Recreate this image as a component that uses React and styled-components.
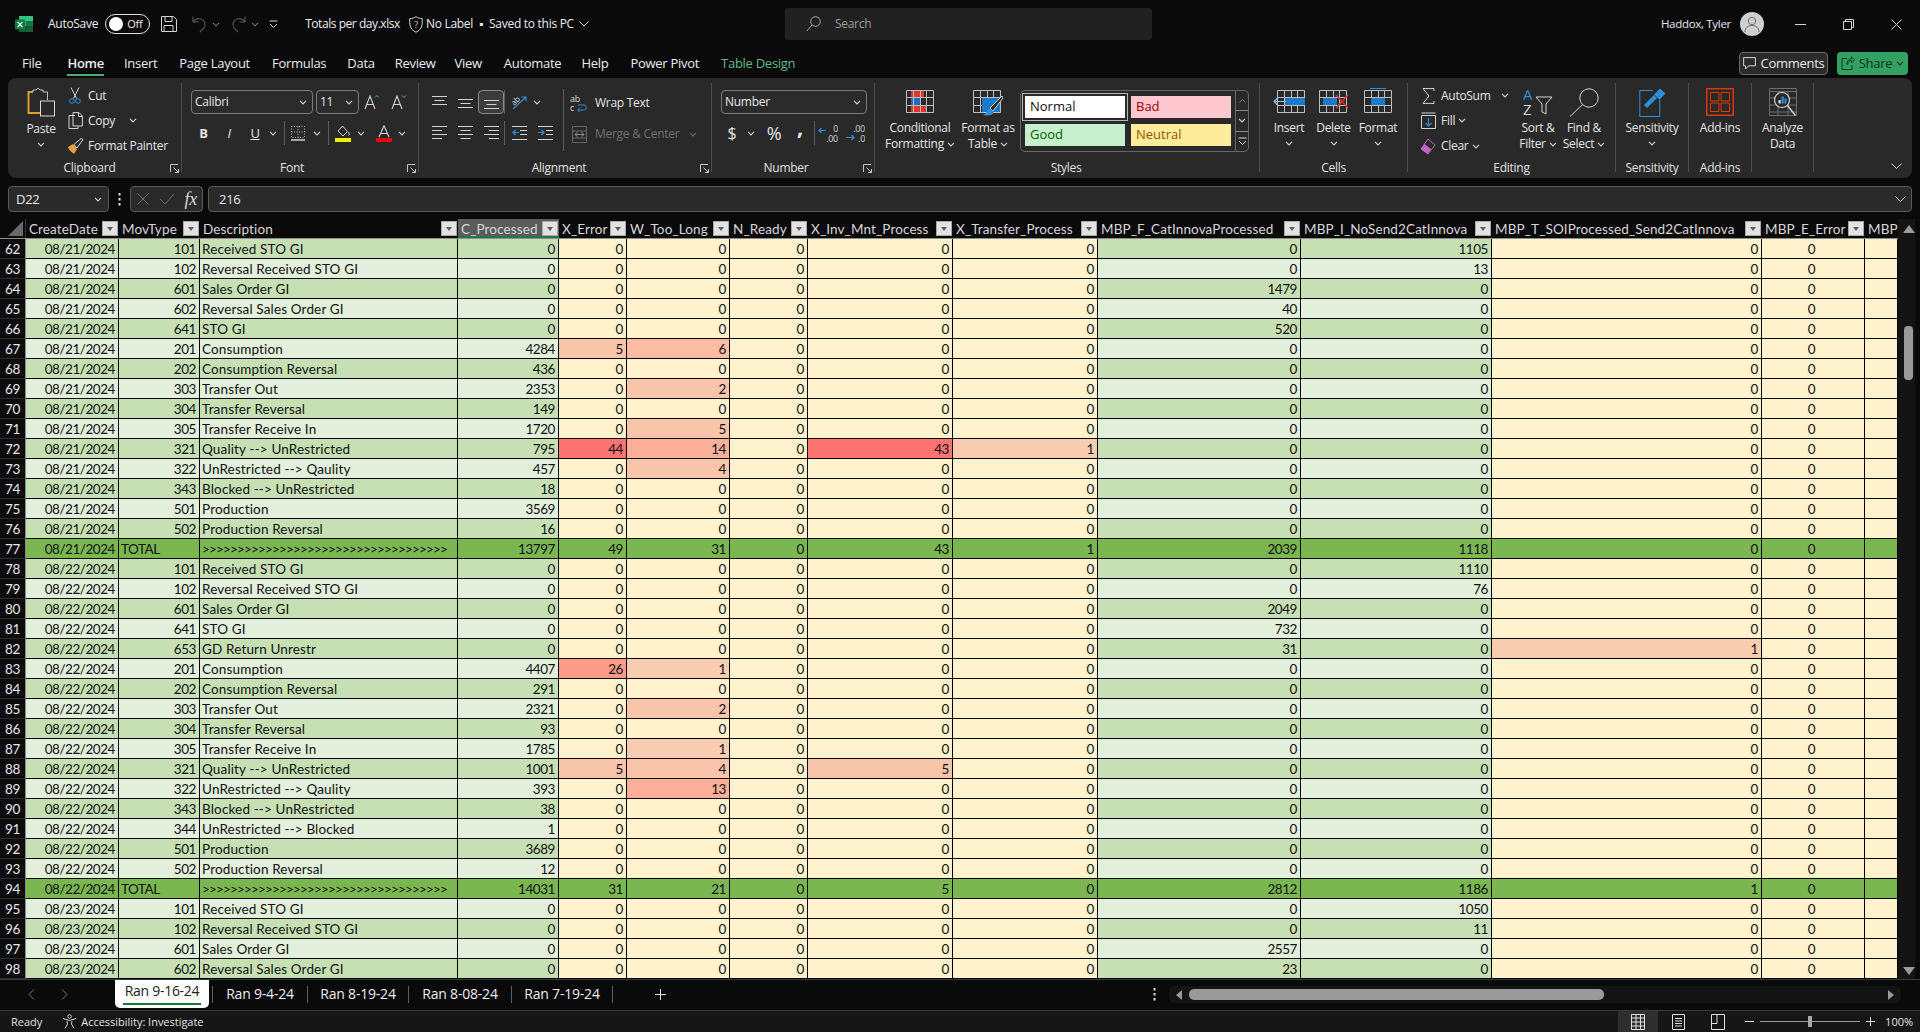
import React from 'react';
import styled, { createGlobalStyle } from 'styled-components';

const Global = createGlobalStyle`
  html, body { margin: 0; padding: 0; background: #0a0a0a; }
  #root { width: 1920px; height: 1032px; overflow: hidden; }
`;

const UI = `"Open Sans", "Noto Sans", sans-serif`;
const SHEET = `Lato, "Open Sans", sans-serif`;
const COLS = '26px 93px 81px 258px 101px 68px 103px 78px 145px 145px 203px 191px 270px 103px 33px';

const Page = styled.div`
  width: 1920px; height: 1032px; background: #0a0a0a; color: #e8e8e8;
  display: flex; flex-direction: column;
  font: 12px/16px ${UI}; letter-spacing: -0.28px; overflow: hidden;
`;

/* ---------- title bar ---------- */
const TitleBar = styled.div`height: 48px; display: flex; align-items: center; padding-left: 14px; flex: none;`;
const TitleText = styled.span`margin-left: ${p => p.$ml || 0}px; color: ${p => p.$c || '#ececec'}; white-space: nowrap; letter-spacing: ${p => p.$ls ?? -0.28}px;`;
const TitleIcon = styled.span`margin-left: ${p => p.$ml || 0}px; display: flex;`;
const Toggle = styled.div`
  margin-left: 7px; width: 45px; height: 20px; box-sizing: border-box; border: 1px solid #e0e0e0; border-radius: 10px;
  display: flex; align-items: center; padding: 0 3px; gap: 4px; font-size: 11px;
`;
const Knob = styled.span`width: 14px; height: 14px; border-radius: 50%; background: #fff;`;
const SearchBox = styled.div`
  margin-left: ${p => p.$ml}px; width: 367px; height: 32px; background: #212121; border-radius: 3px;
  display: flex; align-items: center; padding-left: 21px; gap: 14px; color: #9c9c9c; box-sizing: border-box;
`;
const TitleRight = styled.div`margin-left: auto; display: flex; align-items: center;`;
const UserName = styled.span`font-size: 11.5px; letter-spacing: -0.3px;`;
const Avatar = styled.span`
  margin: 0 12px 0 9px; width: 24px; height: 24px; border-radius: 50%; background: #cfcfcf; display: flex; align-items: center; justify-content: center;
`;
const WinBtn = styled.span`width: 48px; display: flex; justify-content: center;`;

/* ---------- tabs ---------- */
const TabRow = styled.div`height: 30px; display: flex; align-items: center; flex: none; padding-left: 22px; font-size: 13px;`;
const Tab = styled.span`
  margin-right: ${p => p.$mr}px; height: 24px; line-height: 26px; white-space: nowrap;
  color: ${p => p.$green ? '#5cbb80' : '#ececec'}; font-weight: ${p => p.$active ? 600 : 400};
  border-bottom: ${p => p.$active ? '2px solid #4aa870' : '2px solid transparent'};
`;
const TabTools = styled.div`margin-left: auto; display: flex; gap: 9px; padding-right: 12px;`;
const CommentBtn = styled.div`
  width: 89px; height: 23px; box-sizing: border-box; border: 1px solid #6a6a6a; border-radius: 4px; background: #2b2b2b;
  display: flex; align-items: center; justify-content: center; gap: 5px;
`;
const ShareBtn = styled.div`
  width: 71px; height: 23px; border-radius: 4px; background: #33a161; color: #10331f;
  display: flex; align-items: center; justify-content: center; gap: 4px;
`;

/* ---------- ribbon ---------- */
const Ribbon = styled.div`
  margin: 0 8px; height: 100px; flex: none; box-sizing: border-box; background: #292929; border-radius: 8px;
  display: flex; padding-top: 5px; color: #e6e6e6;
`;
const Group = styled.section`
  width: ${p => p.$w}px; height: 89px; flex: none; box-sizing: border-box; border-right: 1px solid #4c4c4c;
  display: flex; flex-direction: column;
`;
const Body = styled.div`
  height: 76px; flex: none; display: flex; padding-left: ${p => p.$pl || 0}px; box-sizing: border-box;
  justify-content: ${p => p.$center ? 'center' : 'flex-start'};
`;
const Foot = styled.div`
  height: 18px; flex: none; line-height: 18px; display: grid; grid-template-columns: 1fr auto 1fr; align-items: center; text-align: center;
  padding-right: ${p => p.$pr || 0}px; box-sizing: border-box; color: #e2e2e2;
`;
const Launcher = styled.span`grid-column: 3; justify-self: end; margin-right: ${p => p.$mr || 0}px; display: flex;`;
const FootLabel = styled.span`grid-column: 2;`;
const PasteCol = styled.div`width: 40px; display: flex; flex-direction: column; align-items: center; padding-top: 4px;`;
const PasteLabel = styled.span`margin-top: 4px; line-height: 16px;`;
const ChevRow = styled.span`display: flex; justify-content: center; height: 14px; align-items: center;`;
const Stack = styled.div`
  width: ${p => p.$w}px; margin-left: ${p => p.$ml || 0}px; display: flex; flex-direction: column; padding-top: ${p => p.$pt ?? 0}px;
`;
const StackRow = styled.div`
  height: 26px; display: flex; align-items: center; gap: ${p => p.$gap ?? 4}px; white-space: nowrap; color: ${p => p.$dim ? '#707070' : 'inherit'};
  margin-top: ${p => p.$mt || 0}px;
`;
const IconCell = styled.span`width: ${p => p.$w || 18}px; flex: none; display: flex; justify-content: center; align-items: center;`;
const Tools = styled.div`display: flex; flex-direction: column; gap: 7px; padding-top: 7px;`;
const ToolRow = styled.div`height: 24px; display: flex; align-items: center;`;
const Combo = styled.div`
  width: ${p => p.$w}px; height: 24px; box-sizing: border-box; border: 1px solid #7a7a7a; border-radius: 4px; background: #2b2b2b;
  margin-right: ${p => p.$mr || 0}px; padding: 0 5px 0 3px; display: flex; align-items: center; justify-content: space-between; flex: none;
`;
const Tool = styled.span`
  width: ${p => p.$w}px; height: 24px; flex: none; display: flex; align-items: center; justify-content: center; box-sizing: border-box;
  font-size: ${p => p.$fs || 12}px; padding-bottom: ${p => p.$pb || 0}px;
  ${p => p.$on ? 'border: 1px solid #8a8a8a; border-radius: 4px; background: #3c3c3c;' : ''}
`;
const Sep = styled.span`width: 1px; height: ${p => p.$h || 24}px; background: #5c5c5c; flex: none;`;
const TallSep = styled.span`width: 1px; height: 62px; margin-top: 6px; background: #5c5c5c; flex: none;`;
const Big = styled.div`
  width: ${p => p.$w ? p.$w + 'px' : 'auto'}; flex: none; display: flex; flex-direction: column; align-items: center; padding-top: 5px; text-align: center; white-space: nowrap;
`;
const BigIcon = styled.div`height: 28px; margin-bottom: 4px; display: flex; justify-content: center; align-items: flex-start;`;
const BigLine = styled.div`height: 16px; display: flex; align-items: center; justify-content: center; gap: 3px;`;
const Gallery = styled.div`
  width: 229px; height: 62px; margin: 7px 0 0 4px; box-sizing: border-box; border: 1px solid #666; border-radius: 5px; display: flex; flex: none;
`;
const GalleryGrid = styled.div`
  display: grid; grid-template-columns: 100px 100px; grid-auto-rows: 22px; gap: 6px; padding: 5px 0 0 4px; width: 215px; box-sizing: border-box;
`;
const Style = styled.div`
  background: ${p => p.$bg}; color: ${p => p.$c}; padding-left: 5px; font-size: 13px; line-height: 20px; letter-spacing: 0;
  ${p => p.$sel ? 'outline: 1px solid #b4b4b4; outline-offset: 2px;' : ''}
`;
const Scrollers = styled.div`width: 13px; margin-left: auto; display: flex; flex-direction: column;`;
const Scroller = styled.span`
  flex: 1; display: flex; align-items: center; justify-content: center; box-sizing: border-box; border-left: 1px solid #666;
  & + & { border-top: 1px solid #8a8a8a; }
`;
const Collapse = styled.div`flex: 1; display: flex; justify-content: flex-end; align-items: flex-end; padding: 0 10px 9px 0;`;

/* ---------- formula bar ---------- */
const FormulaBar = styled.div`margin: 8px 8px 0; height: 26px; display: flex; flex: none; align-items: stretch; font-size: 13px;`;
const NameBox = styled.div`
  width: 101px; box-sizing: border-box; border: 1px solid #5a5a5a; border-radius: 4px; background: #2a2a2a;
  display: flex; align-items: center; justify-content: space-between; padding: 0 6px 0 7px;
`;
const Dots = styled.span`width: 21px; display: flex; justify-content: center; align-items: center;`;
const FxBox = styled.div`
  width: 73px; box-sizing: border-box; border: 1px solid #5a5a5a; border-radius: 4px; background: #2a2a2a;
  display: flex; align-items: center; justify-content: space-between; padding: 0 5px 0 6px; margin-right: 5px;
`;
const FxLabel = styled.i`font: italic 18px "Liberation Serif", serif; color: #d8d8d8;`;
const FormulaInput = styled.div`
  flex: 1; box-sizing: border-box; border: 1px solid #5a5a5a; border-radius: 4px; background: #2a2a2a;
  display: flex; align-items: center; justify-content: space-between; padding: 0 5px 0 10px;
`;

/* ---------- sheet ---------- */
const SheetArea = styled.div`margin-top: 7px; display: flex; flex: none; height: 760px;`;
const Table = styled.div`width: 1898px; flex: none; overflow: hidden; font: 13.5px/21px ${SHEET}; letter-spacing: -0.45px;`;
const HeaderRow = styled.div`display: grid; grid-template-columns: ${COLS}; height: 20px; box-sizing: border-box; border-bottom: 1px solid #8f8f8f;`;
const Corner = styled.div`display: flex; align-items: flex-end; justify-content: flex-end; padding: 0 2px 2px 0; border-right: 1px solid #333;`;
const HeadCell = styled.div`
  display: flex; align-items: center; justify-content: space-between; padding: 0 1px 0 3px; overflow: hidden; white-space: nowrap; color: #d6d6d6;
  background: ${p => p.$sel ? '#5c5c5c' : '#0a0a0a'}; min-width: 0; box-sizing: border-box; letter-spacing: 0.12px;
  ${p => p.$sel ? 'box-shadow: inset 0 -2px 0 #1f7a4a;' : ''}
`;
const HeadText = styled.span`padding-top: 2px; line-height: 19px;`;
const Filter = styled.span`
  width: 16px; height: 15px; flex: none; background: #e2e2e2; border: 1px solid #a8a8a8; box-sizing: border-box;
  display: flex; align-items: center; justify-content: center;
  &::before { content: ''; border: 3.5px solid transparent; border-top: 4px solid #5e5e5e; border-bottom: 0; }
`;
const Row = styled.div`display: grid; grid-template-columns: ${COLS}; height: 20px;`;
const RowNum = styled.div`background: #0c0c0c; color: #e6e6e6; text-align: center; box-sizing: border-box; border-right: 1px solid #8f8f8f; border-bottom: 1px solid #2e2e2e; height: 20px; overflow: hidden;`;
const Cell = styled.div`
  background: ${p => p.$bg}; color: #111; box-sizing: border-box; border-right: 1px solid #000; border-bottom: 1px solid #000; height: 20px;
  text-align: ${p => p.$align || 'right'}; padding: 0 ${p => p.$align === 'left' ? 0 : 3}px 0 ${p => p.$align === 'left' ? 2 : 0}px;
  letter-spacing: ${p => p.$ls ?? -0.45}px;
  white-space: nowrap; overflow: hidden; min-width: 0;
`;
const VScroll = styled.div`
  width: 17px; flex: none; background: #141414; display: flex; flex-direction: column; align-items: flex-end;
  padding: 6px 0 4px; box-sizing: border-box;
`;
const VThumb = styled.div`width: 9px; height: 54px; margin: 93px 2px 0 0; border-radius: 4px; background: #9a9a9a;`;
const VEnd = styled.div`margin-top: auto;`;

/* ---------- sheet tabs ---------- */
const SheetBar = styled.div`height: 31px; flex: none; display: flex; align-items: flex-start; border-top: 1px solid #3a3a3a; box-sizing: border-box; font-size: 14px; letter-spacing: -0.2px;`;
const NavArrows = styled.div`width: 115px; height: 28px; display: flex; align-items: center; padding-left: 28px; gap: 26px; box-sizing: border-box;`;
const ActiveTab = styled.div`
  width: 94px; height: 28px; margin-right: 3px; background: #fff; color: #222; border-radius: 0 0 5px 5px; text-align: center; line-height: 22px; position: relative; box-sizing: border-box; font-weight: 500; letter-spacing: -0.28px;
  &::after { content: ''; position: absolute; left: 8px; right: 8px; bottom: 3px; height: 2px; background: #107c41; }
`;
const SheetTab = styled.div`
  width: ${p => p.$w}px; height: 17px; margin-top: 6px; line-height: 15px; text-align: center; border-right: 1px solid #5e5e5e; box-sizing: border-box; color: #eee;
  ${p => p.$first ? 'border-left: 1px solid #5e5e5e;' : ''}
`;
const Plus = styled.div`margin-left: 42px; height: 28px; display: flex; align-items: center;`;
const SheetDots = styled.div`margin-left: 487px; height: 28px; display: flex; align-items: center;`;
const HScroll = styled.div`
  margin: 6px 0 0 13px; width: 732px; height: 17px; background: #141414; border-radius: 6px; display: flex; align-items: center; padding: 0 6px; box-sizing: border-box;
`;
const HThumb = styled.div`width: 415px; height: 11px; margin-left: 6px; background: #9a9a9a; border-radius: 5px;`;
const HEnd = styled.span`margin-left: auto; display: flex;`;

/* ---------- status bar ---------- */
const Status = styled.div`
  height: 22px; flex: none; background: #161616; border-top: 1px solid #3a3a3a; box-sizing: border-box; display: flex; align-items: center; font-size: 11px; padding-left: 11px; color: #e2e2e2; letter-spacing: -0.02px;
`;
const StatusAcc = styled.div`margin-left: 20px; display: flex; align-items: center; gap: 4px;`;
const StatusRight = styled.div`margin-left: auto; display: flex; align-items: center; height: 100%;`;
const ViewBtn = styled.span`width: 40px; height: 100%; display: flex; align-items: center; justify-content: center; background: ${p => p.$on ? '#2e2e2e' : 'transparent'};`;
const ZoomGap = styled.span`width: 7px;`;
const Zoom = styled.div`width: 100px; height: 1px; background: #9a9a9a; margin: 0 6px; display: flex; align-items: center; justify-content: center;`;
const ZoomThumb = styled.span`width: 4px; height: 11px; background: #a8a8a8; flex: none;`;
const Pct = styled.span`margin: 0 7px 0 10px;`;

/* ---------- icons ---------- */
const Svg = ({ w, h, children, ...r }) => <svg width={w} height={h} viewBox={`0 0 ${w} ${h}`} fill="none" style={{ display: 'block', flex: 'none' }} {...r}>{children}</svg>;
const L = '#d4d4d4', B = '#2e8fdc', R = '#e0362c';
const Chev = ({ c = '#d0d0d0' }) => <Svg w={8} h={5}><path d="M1 .8l3 3 3-3" stroke={c} strokeWidth="1.2" /></Svg>;
const LaunchIcon = () => <Svg w={9} h={9}><path d="M.5 8V.5H8M8.5 8.5L3.5 3.5M8.5 5v3.5H5" stroke="#c4c4c4" /></Svg>;
const ExcelLogo = () => <Svg w={20} h={18}><rect x="5" y="1" width="14" height="16" rx="1" fill="#21a366" /><rect x="5" y="1" width="14" height="5" fill="#33c481" /><rect x="12" y="6" width="7" height="5" fill="#107c41" /><rect x="5" y="11" width="14" height="6" fill="#185c37" /><rect x="1" y="4.5" width="10" height="10" rx="1" fill="#107c41" /><path d="M3.6 6.8L8.4 12.2M8.4 6.8L3.6 12.2" stroke="#fff" strokeWidth="1.2" /></Svg>;
const SaveIcon = () => <Svg w={16} h={16}><path d="M.5.5h12l3 3v12H.5zM4 .5v5h7v-5M3 15.5v-6h9v6" stroke={L} /></Svg>;
const UndoIcon = ({ flip }) => <Svg w={15} h={18} style={{ display: 'block', transform: flip ? 'scaleX(-1)' : 'none', opacity: .42 }}><path d="M1 7V1.500M1 7h5.500M1 7c2-3 5-4 8-3 4 1 5 6 3 9l-4 4" stroke="#bbb" strokeWidth="1.100" /></Svg>;
const QatIcon = () => <Svg w={9} h={9}><path d="M.5 1h8M1 4l3.500 3.500L8 4" stroke={L} /></Svg>;
const ShieldIcon = () => <Svg w={14} h={17}><path d="M7 .7c2 1.300 4 2 6.300 2 0 6 0 10.500-6.300 13.600C.700 13.200.700 8.700.700 2.700 3 2.700 5 2 7 .7z" stroke={L} /><text x="7" y="11.500" fontSize="9" fill={L} textAnchor="middle" fontFamily="Open Sans">?</text></Svg>;
const SearchIcon = () => <Svg w={15} h={16}><circle cx="9.500" cy="5.500" r="4.800" stroke="#a8a8a8" /><path d="M6 9L.8 15" stroke="#a8a8a8" /></Svg>;
const UserIcon = () => <Svg w={16} h={17}><circle cx="8" cy="5" r="3.700" stroke="#6c6c6c" /><path d="M1 16c0-4 3-6.500 7-6.500s7 2.500 7 6.500" stroke="#6c6c6c" /></Svg>;
const CommentIcon = () => <Svg w={13} h={13}><path d="M.6.6h11.800v8.200H5.500L2.500 12V8.800H.6z" stroke={L} /></Svg>;
const ShareIcon = () => <Svg w={14} h={14}><path d="M6 2.500H1v11h10V9M6.500 9c0-3 2-4.700 4-4.700V7L13.500 3.700 10.500.8v2C7 2.800 5.300 6 6.500 9z" stroke="#123d24" /></Svg>;

const PasteIcon = () => <Svg w={28} h={30}><path d="M6 5H1.500v21H13" stroke="#e59a2e" strokeWidth="2" /><path d="M6 5V3h3l2-2 2 2h3v2M16 5h4.500v8" stroke="#c2c2c2" /><rect x="13.500" y="14" width="14" height="15" stroke="#dcdcdc" fill="#292929" /></Svg>;
const CutIcon = () => <Svg w={12} h={17}><path d="M2 .5l5.500 11M10 .5L4.500 11.500" stroke="#d0d0d0" /><circle cx="3" cy="14" r="2.300" stroke={B} /><circle cx="9" cy="14" r="2.300" stroke={B} /></Svg>;
const CopyIcon = () => <Svg w={15} h={17}><path d="M7 3.500H1v13h9v-2" stroke={L} /><path d="M5 .6h6l3.400 3.400v10H5zM10.500.6V4.500h4" stroke={L} /></Svg>;
const PainterIcon = () => <Svg w={17} h={17}><path d="M1 9l5-3 4 5-3 5C5 14 1.500 12 1 9z" fill="#e5a13c" /><path d="M7 6.500l3 3.500 6-8.500-2-1z" stroke={L} /></Svg>;
const GrowIcon = ({ up }) => <Svg w={16} h={16}><path d="M1 15L6 2l5 13M3 10.500h6" stroke={L} strokeWidth="1.100" /><path d={up ? 'M11 3.500l2-2 2 2' : 'M11 1.500l2 2 2-2'} stroke="#4ea6e6" /></Svg>;
const BorderIcon = () => <Svg w={14} h={15}><path d="M.5.5h13v11H.5zM7 .5v11M.5 6h13" stroke="#aaa" strokeDasharray="1 1.500" /><path d="M0 14h14" stroke="#eee" strokeWidth="1.300" /></Svg>;
const FillIcon = () => <Svg w={16} h={17}><path d="M7.500 1l5 5.500-4.500 4.500-5-5z" stroke={L} /><path d="M13.500 7c1 2 1 3 0 3.500" stroke={L} /><rect y="13" width="16" height="4" fill="#f5ef00" /></Svg>;
const FontColorIcon = () => <Svg w={16} h={17}><path d="M3 12L8 .8 13 12M4.800 8.500h6.400" stroke={L} strokeWidth="1.100" /><rect y="13" width="16" height="4" fill="#ee0000" /></Svg>;
const Lines = ({ ys, a }) => <Svg w={15} h={16}>{ys.map((y, i) => { const x = a === 'l' ? [0, i % 2 ? 10 : 15] : a === 'r' ? [i % 2 ? 5 : 0, 15] : [i % 2 ? 2.500 : 0, i % 2 ? 12.500 : 15]; return <path key={y} d={`M${x[0]} ${y}.5H${x[1]}`} stroke={L} />; })}</Svg>;
const OrientIcon = () => <Svg w={17} h={15}><text x="0" y="9" fontSize="8" fill={L} fontFamily="Open Sans" transform="rotate(-45 4 6)">ab</text><path d="M2 14L15 2M10.500 2H15v4.500" stroke={B} strokeWidth="1.100" /></Svg>;
const IndentIcon = ({ dir }) => <Svg w={15} h={16}><path d="M0 1.500h15M8 5.500h7M8 9.500h7M0 14.500h15" stroke={L} /><path d={dir === 'l' ? 'M7 7.500H.8M3.500 5L1 7.500 3.500 10' : 'M0 7.500h6.200M3.500 5L6 7.500 3.500 10'} stroke={B} strokeWidth="1.200" /></Svg>;
const WrapIcon = () => <Svg w={18} h={18}><text x="0" y="8" fontSize="9" fill={L} fontFamily="Open Sans">ab</text><text x="0" y="17" fontSize="9" fill={L} fontFamily="Open Sans">c</text><path d="M8 11h6c3 0 3 5 0 5H8M10 13.500L7.500 16l2.500 2.500" stroke={B} /></Svg>;
const MergeIcon = () => <Svg w={15} h={17}><path d="M.5.5h14v16H.5zM.5 5h14M.5 12h14M5 5v7M10 5v7" stroke="#666" /><path d="M3 8.500h9M4.500 7L3 8.500 4.500 10M10.500 7L12 8.500 10.500 10" stroke="#888" /></Svg>;
const DecIcon = ({ inc }) => <Svg w={20} h={19}>
  <text x="20" y="8" textAnchor="end" fontSize="9" fill={L} fontFamily="Open Sans">{inc ? '0' : '.00'}</text>
  <text x="20" y="18" textAnchor="end" fontSize="9" fill={L} fontFamily="Open Sans">{inc ? '.00' : '.0'}</text>
  <path d={inc ? 'M8 6.500H1M3.500 4L1 6.500 3.500 9' : 'M1 13.500h8M6.500 11L9 13.500 6.500 16'} stroke={B} strokeWidth="1.200" />
</Svg>;
const GridBase = ({ w = 27, h = 22, x = 0.5, y = 2.5, c = 4, r = 3 }) => {
  const out = [];
  for (let i = 0; i <= c; i++) out.push(`M${x + Math.round(i * w / c)} ${y}v${h}`);
  for (let i = 0; i <= r; i++) out.push(`M${x} ${y + Math.round(i * h / r)}h${w}`);
  return <path d={out.join('')} stroke="#bdbdbd" />;
};
const CFIcon = () => <Svg w={28} h={28}><rect x="5" y="3" width="13" height="7" fill={R} /><rect x="5" y="10" width="9" height="7" fill="#1a6fc0" /><rect x="5" y="17" width="15" height="7" fill={R} /><GridBase /></Svg>;
const TableIcon = () => <Svg w={30} h={28}><GridBase /><rect x="9" y="10" width="18" height="14" fill="#1a78c8" /><path d="M29 8L17 20l3 3L30 10z" fill="#292929" stroke={L} /><path d="M17 20c-3 1-2 5-7 7 5 1.500 12 0 10-4z" fill="#2e8fdc" /></Svg>;
const InsertIcon = () => <Svg w={32} h={28}><GridBase x={4.500} /><rect x="12" y="10" width="20" height="7" fill="#1a78c8" /><path d="M13 13.500H1M5 9.500l-4 4 4 4" stroke="#8fc4ee" strokeWidth="1.200" /></Svg>;
const DeleteIcon = () => <Svg w={30} h={28}><GridBase /><rect x="4" y="10" width="14" height="7" fill="#1a78c8" /><path d="M17 7l12 13M29 7L17 20" stroke={R} strokeWidth="1.400" /></Svg>;
const FormatIcon = () => <Svg w={28} h={28}><GridBase /><rect x="7" y="10" width="14" height="7" fill="#1a78c8" /><path d="M6 .5h16" stroke={B} /></Svg>;
const SigmaIcon = () => <Svg w={13} h={16}><path d="M12 3V.6H1l6 7.400-6 7.400h11V13" stroke={L} /></Svg>;
const FillDownIcon = () => <Svg w={15} h={17}><path d="M.5 3.500h14v13H.5zM.5 1h14" stroke={L} /><path d="M7.500 6v8M4.500 11l3 3 3-3" stroke={B} strokeWidth="1.200" /></Svg>;
const ClearIcon = () => <Svg w={16} h={17}><path d="M1 11l7-10 7 6-7 9z" stroke="#c062c8" /><path d="M1 11l3.500-5 6.500 5-3 5z" fill="#c062c8" /></Svg>;
const SortIcon = () => <Svg w={30} h={28}><text x="0" y="12" fontSize="15" fill={B} fontFamily="Open Sans">A</text><text x="0" y="27" fontSize="15" fill={L} fontFamily="Open Sans">Z</text><path d="M13 9h16l-6 7v10l-4-2v-8z" stroke={L} /></Svg>;
const FindIcon = () => <Svg w={30} h={29}><circle cx="20" cy="10" r="9.200" stroke={L} /><path d="M13.500 16.500L1 28.500" stroke={L} /></Svg>;
const SensIcon = () => <Svg w={27} h={29}><path d="M14 2.500H.8v26h20v-17" stroke={B} /><path d="M5 17L15 7l3 3-10 10z" fill={B} /><path d="M15 6.500l6-6 5.500 5-6 6z" fill={B} /></Svg>;
const AddinIcon = () => <Svg w={28} h={28}><rect x=".75" y=".75" width="26.500" height="26.500" stroke="#d83b01" strokeWidth="1.500" /><path d="M4.500 4.500h8.500v8.500H4.500zM15 4.500h8.500v8.500H15zM4.500 15h8.500v8.500H4.500zM15 15h8.500v8.500H15z" stroke="#d83b01" /></Svg>;
const AnalyzeIcon = () => <Svg w={28} h={28}><path d="M.5.5h27v27H.5zM.5 3.500h27M.5 10h27M.5 17h27M.5 24h27M9 3.500v24M19 3.500v24" stroke="#6f6f6f" /><circle cx="13" cy="12" r="7.500" fill="#292929" stroke={L} strokeWidth="1.200" /><path d="M18.500 17.500l8 10" stroke={L} strokeWidth="1.400" /><rect x="9.500" y="12" width="2.200" height="3.500" fill={L} /><rect x="12.500" y="8.500" width="2.200" height="7" fill={B} /><rect x="15.500" y="10.500" width="2" height="5" fill={B} /></Svg>;
const X = ({ s = 12, c = L }) => <Svg w={s} h={s}><path d={`M.5.5L${s - .5} ${s - .5}M${s - .5} .5L.5 ${s - .5}`} stroke={c} /></Svg>;
const Check = () => <Svg w={16} h={12}><path d="M1 6l5 5L15 1" stroke="#6c6c6c" /></Svg>;
const Tri = ({ d }) => {
  const p = { u: 'M0 8L6 0l6 8z', d: 'M0 0l6 8 6-8z', l: 'M7 0v10L1 5z', r: 'M1 0v10l6-5z' }[d];
  return <Svg w={d === 'l' || d === 'r' ? 8 : 12} h={d === 'l' || d === 'r' ? 10 : 8}><path d={p} fill="#9a9a9a" /></Svg>;
};
const AccIcon = () => <Svg w={15} h={15}><circle cx="7.500" cy="2.500" r="1.800" stroke={L} /><path d="M1 4.500l6.500 2 6.500-2M5 7l.5 3L3 14.500M10 7l-.5 3 2.500 4.500" stroke={L} /></Svg>;
const ViewNormal = () => <Svg w={14} h={16}><path d="M.5.5h13v15H.5zM.5 4h13M.5 8h13M.5 12h13M5 .5v15M9.500 .5v15" stroke="#e0e0e0" /></Svg>;
const ViewPage = () => <Svg w={13} h={16}><path d="M.5.5h12v15H.5z" stroke="#e0e0e0" /><path d="M3 4.500h7M3 7h7M3 9.500h7M3 12h7" stroke="#e0e0e0" /></Svg>;
const ViewBreak = () => <Svg w={14} h={16}><path d="M.5.5h13v15H.5zM6 .5v9H.5" stroke="#e0e0e0" /></Svg>;
const PlusIcon = ({ s = 11 }) => <Svg w={s} h={s}><path d={`M0 ${s / 2}H${s}M${s / 2} 0V${s}`} stroke="#dcdcdc" /></Svg>;
const MinusIcon = () => <Svg w={9} h={9}><path d="M0 4.500H9" stroke="#dcdcdc" /></Svg>;
const NavArrow = ({ r }) => <Svg w={7} h={11}><path d={r ? 'M1 .5l5 5-5 5' : 'M6 .5l-5 5 5 5'} stroke="#777" /></Svg>;
const VDots = () => <Svg w={3} h={13}><path d="M1.500 0v2.500M1.500 5v2.500M1.500 10v2.500" stroke="#ddd" strokeWidth="2" /></Svg>;

/* ---------- data ---------- */
const D1 = '08/21/2024', D2 = '08/22/2024', D3 = '08/23/2024';
const ARROWS = '>'.repeat(35);
const rows = [
  [62, D1, 101, 'Received STO GI', 0, 0, 0, 0, 0, 0, 0, 1105, 0, 0],
  [63, D1, 102, 'Reversal Received STO GI', 0, 0, 0, 0, 0, 0, 0, 13, 0, 0],
  [64, D1, 601, 'Sales Order GI', 0, 0, 0, 0, 0, 0, 1479, 0, 0, 0],
  [65, D1, 602, 'Reversal Sales Order GI', 0, 0, 0, 0, 0, 0, 40, 0, 0, 0],
  [66, D1, 641, 'STO GI', 0, 0, 0, 0, 0, 0, 520, 0, 0, 0],
  [67, D1, 201, 'Consumption', 4284, 5, 6, 0, 0, 0, 0, 0, 0, 0],
  [68, D1, 202, 'Consumption Reversal', 436, 0, 0, 0, 0, 0, 0, 0, 0, 0],
  [69, D1, 303, 'Transfer Out', 2353, 0, 2, 0, 0, 0, 0, 0, 0, 0],
  [70, D1, 304, 'Transfer Reversal', 149, 0, 0, 0, 0, 0, 0, 0, 0, 0],
  [71, D1, 305, 'Transfer Receive In', 1720, 0, 5, 0, 0, 0, 0, 0, 0, 0],
  [72, D1, 321, 'Quality --> UnRestricted', 795, 44, 14, 0, 43, 1, 0, 0, 0, 0],
  [73, D1, 322, 'UnRestricted --> Qaulity', 457, 0, 4, 0, 0, 0, 0, 0, 0, 0],
  [74, D1, 343, 'Blocked --> UnRestricted', 18, 0, 0, 0, 0, 0, 0, 0, 0, 0],
  [75, D1, 501, 'Production', 3569, 0, 0, 0, 0, 0, 0, 0, 0, 0],
  [76, D1, 502, 'Production Reversal', 16, 0, 0, 0, 0, 0, 0, 0, 0, 0],
  [77, D1, 'TOTAL', ARROWS, 13797, 49, 31, 0, 43, 1, 2039, 1118, 0, 0],
  [78, D2, 101, 'Received STO GI', 0, 0, 0, 0, 0, 0, 0, 1110, 0, 0],
  [79, D2, 102, 'Reversal Received STO GI', 0, 0, 0, 0, 0, 0, 0, 76, 0, 0],
  [80, D2, 601, 'Sales Order GI', 0, 0, 0, 0, 0, 0, 2049, 0, 0, 0],
  [81, D2, 641, 'STO GI', 0, 0, 0, 0, 0, 0, 732, 0, 0, 0],
  [82, D2, 653, 'GD Return Unrestr', 0, 0, 0, 0, 0, 0, 31, 0, 1, 0],
  [83, D2, 201, 'Consumption', 4407, 26, 1, 0, 0, 0, 0, 0, 0, 0],
  [84, D2, 202, 'Consumption Reversal', 291, 0, 0, 0, 0, 0, 0, 0, 0, 0],
  [85, D2, 303, 'Transfer Out', 2321, 0, 2, 0, 0, 0, 0, 0, 0, 0],
  [86, D2, 304, 'Transfer Reversal', 93, 0, 0, 0, 0, 0, 0, 0, 0, 0],
  [87, D2, 305, 'Transfer Receive In', 1785, 0, 1, 0, 0, 0, 0, 0, 0, 0],
  [88, D2, 321, 'Quality --> UnRestricted', 1001, 5, 4, 0, 5, 0, 0, 0, 0, 0],
  [89, D2, 322, 'UnRestricted --> Qaulity', 393, 0, 13, 0, 0, 0, 0, 0, 0, 0],
  [90, D2, 343, 'Blocked --> UnRestricted', 38, 0, 0, 0, 0, 0, 0, 0, 0, 0],
  [91, D2, 344, 'UnRestricted --> Blocked', 1, 0, 0, 0, 0, 0, 0, 0, 0, 0],
  [92, D2, 501, 'Production', 3689, 0, 0, 0, 0, 0, 0, 0, 0, 0],
  [93, D2, 502, 'Production Reversal', 12, 0, 0, 0, 0, 0, 0, 0, 0, 0],
  [94, D2, 'TOTAL', ARROWS, 14031, 31, 21, 0, 5, 0, 2812, 1186, 1, 0],
  [95, D3, 101, 'Received STO GI', 0, 0, 0, 0, 0, 0, 0, 1050, 0, 0],
  [96, D3, 102, 'Reversal Received STO GI', 0, 0, 0, 0, 0, 0, 0, 11, 0, 0],
  [97, D3, 601, 'Sales Order GI', 0, 0, 0, 0, 0, 0, 2557, 0, 0, 0],
  [98, D3, 602, 'Reversal Sales Order GI', 0, 0, 0, 0, 0, 0, 23, 0, 0, 0],
];
const headers = ['CreateDate', 'MovType', 'Description', 'C_Processed', 'X_Error', 'W_Too_Long', 'N_Ready', 'X_Inv_Mnt_Process', 'X_Transfer_Process', 'MBP_F_CatInnovaProcessed', 'MBP_I_NoSend2CatInnova', 'MBP_T_SOIProcessed_Send2CatInnova', 'MBP_E_Error'];
const GREEN_DARK = '#c6e0b4', GREEN_LIGHT = '#e2efda', AMBER = '#fff2cc', TOTAL = '#7ab751';
const heat = v => v >= 43 ? '#fe7470' : v >= 26 ? '#fd9a88' : v >= 13 ? '#fbae98' : v >= 6 ? '#fbbca3' : v >= 2 ? '#f8c4aa' : '#f8ccb0';
const isAmber = i => (i >= 5 && i <= 9) || i >= 12;

const DataRow = ({ r }) => {
  const total = r[2] === 'TOTAL';
  const stripe = r[0] % 2 === 0 ? GREEN_DARK : GREEN_LIGHT;
  const bgFor = i => {
    if (total) return TOTAL;
    if (!isAmber(i)) return stripe;
    return r[i] > 0 ? heat(r[i]) : AMBER;
  };
  return (
    <Row>
      <RowNum>{r[0]}</RowNum>
      {r.slice(1).map((v, k) => {
        const i = k + 1;
        const align = i === 3 || (i === 2 && total) ? 'left' : i === 13 ? 'center' : 'right';
        const ls = i === 3 ? (total ? -0.83 : 0.15) : undefined;
        return <Cell key={i} $bg={bgFor(i)} $align={align} $ls={ls}>{v}</Cell>;
      })}
      <Cell $bg={total ? TOTAL : AMBER} />
    </Row>
  );
};

const Label = ({ children, pr = 0, launcher }) => (
  <Foot $pr={pr}><FootLabel>{children}</FootLabel>{launcher && <Launcher $mr={2 - pr}><LaunchIcon /></Launcher>}</Foot>
);

export default function App() {
  return (
    <Page>
      <Global />
      <TitleBar>
        <ExcelLogo />
        <TitleText $ml={14}>AutoSave</TitleText>
        <Toggle><Knob />Off</Toggle>
        <TitleIcon $ml={11}><SaveIcon /></TitleIcon>
        <TitleIcon $ml={15}><UndoIcon /></TitleIcon>
        <TitleIcon $ml={5}><Chev c="#666" /></TitleIcon>
        <TitleIcon $ml={11}><UndoIcon flip /></TitleIcon>
        <TitleIcon $ml={5}><Chev c="#666" /></TitleIcon>
        <TitleIcon $ml={10}><QatIcon /></TitleIcon>
        <TitleText $ml={27} $ls={-0.45}>Totals per day.xlsx</TitleText>
        <TitleIcon $ml={9}><ShieldIcon /></TitleIcon>
        <TitleText $ml={3}>No Label</TitleText>
        <TitleText $ml={6}>▪</TitleText>
        <TitleText $ml={6}>Saved to this PC</TitleText>
        <TitleIcon $ml={5}><Svg w={10} h={6}><path d="M.5.5L5 5 9.500.5" stroke={L} /></Svg></TitleIcon>
        <SearchBox $ml={196}><SearchIcon />Search</SearchBox>
        <TitleRight>
          <UserName>Haddox, Tyler</UserName>
          <Avatar><UserIcon /></Avatar>
          <WinBtn><Svg w={11} h={1}><path d="M0 .5h11" stroke={L} /></Svg></WinBtn>
          <WinBtn><Svg w={11} h={11}><path d="M.5 2.500h8v8h-8zM2.500 2.500V.5h8v8H8.500" stroke={L} /></Svg></WinBtn>
          <WinBtn><X s={11} /></WinBtn>
        </TitleRight>
      </TitleBar>

      <TabRow>
        <Tab $mr={26}>File</Tab>
        <Tab $mr={20} $active>Home</Tab>
        <Tab $mr={22}>Insert</Tab>
        <Tab $mr={22}>Page Layout</Tab>
        <Tab $mr={21}>Formulas</Tab>
        <Tab $mr={20}>Data</Tab>
        <Tab $mr={19}>Review</Tab>
        <Tab $mr={22}>View</Tab>
        <Tab $mr={20}>Automate</Tab>
        <Tab $mr={22}>Help</Tab>
        <Tab $mr={22}>Power Pivot</Tab>
        <Tab $mr={0} $green>Table Design</Tab>
        <TabTools>
          <CommentBtn><CommentIcon />Comments</CommentBtn>
          <ShareBtn><ShareIcon />Share<Chev c="#123d24" /></ShareBtn>
        </TabTools>
      </TabRow>

      <Ribbon>
        <Group $w={174}>
          <Body $pl={13}>
            <PasteCol><PasteIcon /><PasteLabel>Paste</PasteLabel><ChevRow><Chev /></ChevRow></PasteCol>
            <Stack $w={110} $ml={5}>
              <StackRow><IconCell><CutIcon /></IconCell>Cut</StackRow>
              <StackRow><IconCell><CopyIcon /></IconCell>Copy<IconCell $w={28}><Chev /></IconCell></StackRow>
              <StackRow><IconCell><PainterIcon /></IconCell>Format Painter</StackRow>
            </Stack>
          </Body>
          <Label launcher pr={10}>Clipboard</Label>
        </Group>

        <Group $w={237}>
          <Body $pl={9}>
            <Tools>
              <ToolRow>
                <Combo $w={122} $mr={3}>Calibri<Chev /></Combo>
                <Combo $w={43}>11<Chev /></Combo>
                <Tool $w={26}><GrowIcon up /></Tool>
                <Tool $w={28}><GrowIcon /></Tool>
              </ToolRow>
              <ToolRow>
                <Tool $w={25} $fs={13}><b>B</b></Tool>
                <Tool $w={26} $fs={13}><i>I</i></Tool>
                <Tool $w={26} $fs={13}><u>U</u></Tool>
                <Tool $w={10}><Chev /></Tool>
                <Tool $w={6} />
                <Sep />
                <Tool $w={26}><BorderIcon /></Tool>
                <Tool $w={12}><Chev /></Tool>
                <Tool $w={5} />
                <Sep />
                <Tool $w={28}><FillIcon /></Tool>
                <Tool $w={8}><Chev /></Tool>
                <Tool $w={5} />
                <Tool $w={28}><FontColorIcon /></Tool>
                <Tool $w={8}><Chev /></Tool>
              </ToolRow>
            </Tools>
          </Body>
          <Label launcher pr={16}>Font</Label>
        </Group>

        <Group $w={293}>
          <Body $pl={7}>
            <Tools>
              <ToolRow>
                <Tool $w={26}><Lines ys={[2, 6, 10]} a="c" /></Tool>
                <Tool $w={26}><Lines ys={[5, 9, 13]} a="c" /></Tool>
                <Tool $w={26} $on><Lines ys={[6, 10, 14]} a="c" /></Tool>
                <Sep />
                <Tool $w={28}><OrientIcon /></Tool>
                <Tool $w={8}><Chev /></Tool>
              </ToolRow>
              <ToolRow>
                <Tool $w={26}><Lines ys={[1, 5, 9, 13]} a="l" /></Tool>
                <Tool $w={26}><Lines ys={[1, 5, 9, 13]} a="c" /></Tool>
                <Tool $w={26}><Lines ys={[1, 5, 9, 13]} a="r" /></Tool>
                <Sep />
                <Tool $w={28}><IndentIcon dir="l" /></Tool>
                <Tool $w={24}><IndentIcon dir="r" /></Tool>
              </ToolRow>
            </Tools>
            <Tool $w={6} />
            <TallSep />
            <Stack $w={138} $ml={3} $pt={7}>
              <StackRow $gap={4}><IconCell $w={24}><WrapIcon /></IconCell>Wrap Text</StackRow>
              <StackRow $dim $gap={4} $mt={5}><IconCell $w={24}><MergeIcon /></IconCell>Merge &amp; Center<IconCell $w={20}><Chev c="#666" /></IconCell></StackRow>
            </Stack>
          </Body>
          <Label launcher pr={12}>Alignment</Label>
        </Group>

        <Group $w={163}>
          <Body $pl={9}>
            <Tools>
              <ToolRow><Combo $w={146}>Number<Chev /></Combo></ToolRow>
              <ToolRow>
                <Tool $w={22} $fs={16}>$</Tool>
                <Tool $w={16}><Chev /></Tool>
                <Tool $w={3} />
                <Tool $w={24} $fs={18}>%</Tool>
                <Tool $w={2} />
                <Tool $w={24} $fs={22} $pb={14}><b>,</b></Tool>
                <Tool $w={2} />
                <Sep />
                <Tool $w={26}><DecIcon inc /></Tool>
                <Tool $w={27}><DecIcon /></Tool>
              </ToolRow>
            </Tools>
          </Body>
          <Label launcher pr={14}>Number</Label>
        </Group>

        <Group $w={385}>
          <Body $pl={5}>
            <Big $w={80}><BigIcon><CFIcon /></BigIcon><BigLine>Conditional</BigLine><BigLine>Formatting<Chev /></BigLine></Big>
            <Big $w={56}><BigIcon><TableIcon /></BigIcon><BigLine>Format as</BigLine><BigLine>Table<Chev /></BigLine></Big>
            <Gallery>
              <GalleryGrid>
                <Style $bg="#fff" $c="#111" $sel>Normal</Style>
                <Style $bg="#ffc7ce" $c="#9c0006">Bad</Style>
                <Style $bg="#c6efce" $c="#006100">Good</Style>
                <Style $bg="#ffeb9c" $c="#9c5700">Neutral</Style>
              </GalleryGrid>
              <Scrollers>
                <Scroller><Svg w={7} h={4}><path d="M.5 3.500l3-3 3 3" stroke="#777" /></Svg></Scroller>
                <Scroller><Chev /></Scroller>
                <Scroller><QatIcon /></Scroller>
              </Scrollers>
            </Gallery>
          </Body>
          <Label pr={2}>Styles</Label>
        </Group>

        <Group $w={148}>
          <Body $pl={7}>
            <Big $w={44}><BigIcon><InsertIcon /></BigIcon><BigLine>Insert</BigLine><ChevRow><Chev /></ChevRow></Big>
            <Big $w={45}><BigIcon><DeleteIcon /></BigIcon><BigLine>Delete</BigLine><ChevRow><Chev /></ChevRow></Big>
            <Big $w={44}><BigIcon><FormatIcon /></BigIcon><BigLine>Format</BigLine><ChevRow><Chev /></ChevRow></Big>
          </Body>
          <Label>Cells</Label>
        </Group>

        <Group $w={208}>
          <Body $pl={10}>
            <Stack $w={96}>
              <StackRow $gap={3}><IconCell $w={20}><SigmaIcon /></IconCell>AutoSum<IconCell $w={23}><Chev /></IconCell></StackRow>
              <StackRow $gap={3}><IconCell $w={20}><FillDownIcon /></IconCell>Fill<Chev /></StackRow>
              <StackRow $gap={3}><IconCell $w={20}><ClearIcon /></IconCell>Clear<Chev /></StackRow>
            </Stack>
            <Big $w={48}><BigIcon><SortIcon /></BigIcon><BigLine>Sort &amp;</BigLine><BigLine>Filter<Chev /></BigLine></Big>
            <Big $w={44}><BigIcon><FindIcon /></BigIcon><BigLine>Find &amp;</BigLine><BigLine>Select<Chev /></BigLine></Big>
          </Body>
          <Label>Editing</Label>
        </Group>

        <Group $w={73}>
          <Body $center><Big><BigIcon><SensIcon /></BigIcon><BigLine>Sensitivity</BigLine><ChevRow><Chev /></ChevRow></Big></Body>
          <Label>Sensitivity</Label>
        </Group>
        <Group $w={63}>
          <Body $center><Big><BigIcon><AddinIcon /></BigIcon><BigLine>Add-ins</BigLine></Big></Body>
          <Label>Add-ins</Label>
        </Group>
        <Group $w={62}>
          <Body $center><Big><BigIcon><AnalyzeIcon /></BigIcon><BigLine>Analyze</BigLine><BigLine>Data</BigLine></Big></Body>
          <Foot />
        </Group>
        <Collapse><Svg w={11} h={6}><path d="M.5.5L5.500 5.500 10.500.5" stroke={L} /></Svg></Collapse>
      </Ribbon>

      <FormulaBar>
        <NameBox>D22<Chev /></NameBox>
        <Dots><VDots /></Dots>
        <FxBox><X s={12} c="#6c6c6c" /><Check /><FxLabel>fx</FxLabel></FxBox>
        <FormulaInput>216<Svg w={11} h={6}><path d="M.5.5L5.500 5.500 10.500.5" stroke={L} /></Svg></FormulaInput>
      </FormulaBar>

      <SheetArea>
        <Table>
          <HeaderRow>
            <Corner><Svg w={15} h={15}><path d="M15 0v15H0z" fill="#6a6a6a" /></Svg></Corner>
            {headers.map((h, i) => <HeadCell key={h} $sel={i === 3}><HeadText>{h}</HeadText><Filter /></HeadCell>)}
            <HeadCell><HeadText>MBP_</HeadText></HeadCell>
          </HeaderRow>
          {rows.map(r => <DataRow key={r[0]} r={r} />)}
        </Table>
        <VScroll>
          <Tri d="u" />
          <VThumb />
          <VEnd><Tri d="d" /></VEnd>
        </VScroll>
      </SheetArea>

      <SheetBar>
        <NavArrows><NavArrow /><NavArrow r /></NavArrows>
        <ActiveTab>Ran 9-16-24</ActiveTab>
        <SheetTab $w={96} $first>Ran 9-4-24</SheetTab>
        <SheetTab $w={101}>Ran 8-19-24</SheetTab>
        <SheetTab $w={103}>Ran 8-08-24</SheetTab>
        <SheetTab $w={101}>Ran 7-19-24</SheetTab>
        <Plus><PlusIcon /></Plus>
        <SheetDots><VDots /></SheetDots>
        <HScroll>
          <Tri d="l" />
          <HThumb />
          <HEnd><Tri d="r" /></HEnd>
        </HScroll>
      </SheetBar>

      <Status>
        Ready
        <StatusAcc><AccIcon />Accessibility: Investigate</StatusAcc>
        <StatusRight>
          <ViewBtn $on><ViewNormal /></ViewBtn>
          <ViewBtn><ViewPage /></ViewBtn>
          <ViewBtn><ViewBreak /></ViewBtn>
          <ZoomGap />
          <MinusIcon />
          <Zoom><ZoomThumb /></Zoom>
          <PlusIcon s={9} />
          <Pct>100%</Pct>
        </StatusRight>
      </Status>
    </Page>
  );
}
